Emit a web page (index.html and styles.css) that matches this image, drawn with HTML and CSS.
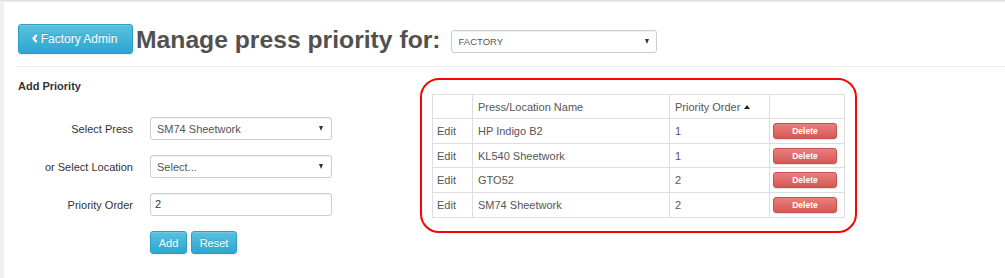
FILE: index.html
```html
<!DOCTYPE html>
<html>
<head>
<meta charset="utf-8">
<link rel="stylesheet" href="styles.css">
</head>
<body>
<div class="topshade"></div>
<div class="wrap">
  <div class="header">
    <button class="btn btn-info btn-back"><svg class="chev" width="6" height="9" viewBox="0 0 6 9"><polyline points="4.6,1 1.4,4.5 4.6,8" fill="none" stroke="#fff" stroke-width="2.2"/></svg>Factory Admin</button>
    <h1 class="title">Manage press priority for:</h1>
    <div class="sel sel-factory"><span>FACTORY</span><i class="arrow"></i></div>
  </div>
  <div class="rule"></div>
  <div class="main">
    <div class="form">
      <h4 class="form-title">Add Priority</h4>
      <div class="row"><label>Select Press</label><div class="sel field"><span>SM74 Sheetwork</span><i class="arrow"></i></div></div>
      <div class="row"><label>or Select Location</label><div class="sel field"><span>Select...</span><i class="arrow"></i></div></div>
      <div class="row"><label>Priority Order</label><div class="input field">2</div></div>
      <div class="row"><label></label><div class="actions"><button class="btn btn-info btn-sm">Add</button><button class="btn btn-info btn-sm">Reset</button></div></div>
    </div>
    <div class="box">
      <table class="grid">
        <thead>
          <tr><th class="c1"></th><th class="c2">Press/Location Name</th><th class="c3">Priority Order<i class="caret"></i></th><th class="c4"></th></tr>
        </thead>
        <tbody>
          <tr class="r25"><td>Edit</td><td>HP Indigo B2</td><td>1</td><td><button class="btn-del">Delete</button></td></tr>
          <tr><td>Edit</td><td>KL540 Sheetwork</td><td>1</td><td><button class="btn-del">Delete</button></td></tr>
          <tr class="r25"><td>Edit</td><td>GTO52</td><td>2</td><td><button class="btn-del">Delete</button></td></tr>
          <tr class="r25"><td>Edit</td><td>SM74 Sheetwork</td><td>2</td><td><button class="btn-del">Delete</button></td></tr>
        </tbody>
      </table>
    </div>
  </div>
</div>
</body>
</html>
```
FILE: styles.css
```css
* { box-sizing: border-box; }
html, body { margin: 0; padding: 0; background: #fff; }
body { font-family: "Liberation Sans", Arial, sans-serif; color: #333; font-size: 11px; }

.topshade { height: 3px; background: linear-gradient(to bottom, #d9d9d9, #f4f4f4 70%, #fff); }
.wrap { border-left: 4px solid #efefef; min-height: 275px; padding-top: 21px; }

.header { display: flex; align-items: flex-start; padding-left: 14px; }
.btn {
  font-family: "Liberation Sans", Arial, sans-serif;
  color: #fff; border-radius: 3px; cursor: pointer; padding: 0;
  border: 1px solid #2a9fc6;
  background: linear-gradient(to bottom, #5ac0de 0%, #2ca7cf 100%);
  box-shadow: inset 0 1px 0 rgba(255,255,255,.15), 0 1px 1px rgba(0,0,0,.08);
  text-shadow: 0 -1px 0 rgba(0,0,0,.15);
}
.btn-back { width: 115px; height: 30px; font-size: 12px; display: flex; align-items: center; justify-content: center; gap: 3px; padding-right: 2px; }
.chev { display: block; margin-top: -1px; }
.title { margin: 0 0 0 3px; font-size: 24.7px; font-weight: bold; color: #515151; line-height: 30px; padding-top: 1px; height: 30px; letter-spacing: 0; }
.sel {
  display: flex; align-items: center; height: 23px;
  border: 1px solid #ccc; border-radius: 3px; background: #fff;
  box-shadow: inset 0 1px 1px rgba(0,0,0,.06);
  color: #555; padding: 0 7px 0 7px;
}
.sel-factory { width: 206px; margin-left: 10px; margin-top: 6px; font-size: 9.5px; text-transform: uppercase; }
.arrow { margin-left: auto; width: 0; height: 0; border-left: 2.5px solid transparent; border-right: 2.5px solid transparent; border-top: 5px solid #333; }

.rule { height: 1px; background: #ececec; margin: 12px 0 0 13px; }

.main { display: flex; align-items: flex-start; padding: 11px 0 0 14px; }
.form { flex: none; width: 402px; }
.form-title { margin: 0; font-size: 11px; font-weight: bold; line-height: 16px; color: #333; }
.row { display: flex; align-items: center; margin-top: 15px; height: 23px; }
.form-title + .row { margin-top: 23px; }
.row label { width: 115px; text-align: right; margin-right: 17px; font-size: 11px; color: #333; }
.field { width: 182px; height: 23px; font-size: 11px; }
.sel.field { padding: 0 8px 0 6px; }
.input { border: 1px solid #ccc; border-radius: 3px; box-shadow: inset 0 1px 1px rgba(0,0,0,.06); color: #333; padding: 0 4px; line-height: 21px; }
.actions { display: flex; gap: 4px; }
.btn-sm { height: 23px; font-size: 11px; }
.btn-sm:first-child { width: 37px; }
.btn-sm:last-child { width: 46px; }

.box { flex: none; width: 437px; margin-left: 0; border: 2px solid #f00; border-radius: 19px; padding: 14px 11px 13px 10px; }
.grid { border-collapse: collapse; width: 412px; table-layout: fixed; font-size: 11px; color: #555; }
.grid th, .grid td { border: 1px solid #ddd; padding: 0 5px; height: 24px; text-align: left; font-weight: normal; white-space: nowrap; }
.grid td:first-child { padding-left: 4px; }
.grid tr.r25 td { height: 25px; }
.c1 { width: 40px; } .c2 { width: 197px; } .c3 { width: 100px; } .c4 { width: 75px; }
.caret { display: inline-block; margin-left: 4px; vertical-align: 2px; width: 0; height: 0; border-left: 3.5px solid transparent; border-right: 3.5px solid transparent; border-bottom: 4px solid #222; }
.grid td:last-child { padding: 0 0 0 3px; }
.btn-del {
  display: block; width: 64px; height: 16px; padding: 0; cursor: pointer;
  font-family: "Liberation Sans", Arial, sans-serif; font-size: 8.5px; font-weight: bold; color: #fff;
  border: 1px solid #c9514e; border-radius: 3px;
  background: linear-gradient(to bottom, #e8807d 0%, #d65854 100%);
  box-shadow: 0 1px 1px rgba(0,0,0,.12);
}
```
